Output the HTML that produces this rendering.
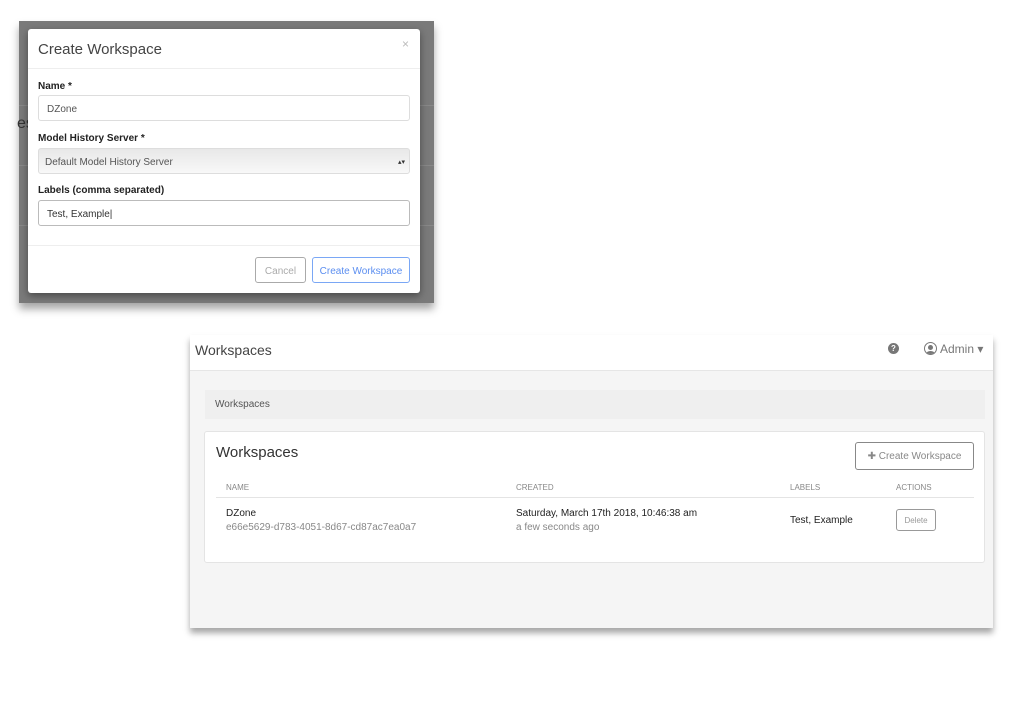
<!DOCTYPE html>
<html><head><style>
*{box-sizing:border-box;margin:0;padding:0}
body{width:1024px;height:728px;background:#fff;font-family:"Liberation Sans",sans-serif;position:relative;overflow:hidden;color:#333}
.abs{position:absolute}
.bd{left:19px;top:21px;width:415px;height:282px;background:#7a7a7a;box-shadow:0 6px 8px rgba(0,0,0,.35)}
.modal{left:28px;top:29px;width:392px;height:264px;background:#fff;border-radius:3px;box-shadow:0 3px 8px rgba(0,0,0,.4)}
.lbl{font-size:10px;font-weight:bold;color:#222}
.inp{height:26px;border:1px solid #ddd;border-radius:3px;font-size:10px;padding-left:8px;line-height:27px;color:#555}
.btn{border-radius:3px;font-size:10px;text-align:center}
</style></head><body>
<div class="abs bd">
 <div class="abs" style="left:0;top:84px;width:415px;height:1px;background:#888"></div>
 <div class="abs" style="left:0;top:144px;width:415px;height:1px;background:#888"></div>
 <div class="abs" style="left:0;top:204px;width:415px;height:1px;background:#888"></div>
 <div class="abs" style="left:-2px;top:94px;font-size:16px;color:#333">es</div>
</div>
<div class="abs modal">
 <div class="abs" style="left:10px;top:12px;font-size:15px;color:#444">Create Workspace</div>
 <div class="abs" style="left:374px;top:8px;font-size:12px;color:#bbb">×</div>
 <div class="abs" style="left:0;top:39px;width:392px;height:1px;background:#eee"></div>
 <div class="abs lbl" style="left:10px;top:52px">Name *</div>
 <div class="abs inp" style="left:10px;top:66px;width:372px">DZone</div>
 <div class="abs lbl" style="left:10px;top:104px">Model History Server *</div>
 <div class="abs inp" style="left:10px;top:119px;width:372px;background:linear-gradient(#e8e8e8,#f8f8f8);padding-left:6px">Default Model History Server<span style="position:absolute;right:4px;top:0;font-size:7px;color:#333">▴▾</span></div>
 <div class="abs lbl" style="left:10px;top:156px">Labels (comma separated)</div>
 <div class="abs inp" style="left:10px;top:171px;width:372px;border-color:#bbb;color:#333">Test, Example|</div>
 <div class="abs" style="left:0;top:216px;width:392px;height:1px;background:#eee"></div>
 <div class="abs btn" style="left:227px;top:228px;width:51px;height:26px;border:1px solid #aaa;color:#aaa;line-height:27px">Cancel</div>
 <div class="abs btn" style="left:284px;top:228px;width:98px;height:26px;border:1px solid #7aa7f5;color:#5b8ef0;line-height:27px">Create Workspace</div>
</div>

<div class="abs" style="left:190px;top:335px;width:803px;height:293px;background:#f5f5f5;box-shadow:0 5px 6px rgba(0,0,0,.35)">
 <div class="abs" style="left:0;top:0;width:803px;height:36px;background:#fff;border-bottom:1px solid #e6e6e6"></div>
 <div class="abs" style="left:5px;top:7px;font-size:14px;color:#444">Workspaces</div>
 <div class="abs" style="left:698px;top:8px;width:11px;height:11px;border-radius:50%;background:#777;color:#fff;font-size:8px;font-weight:bold;text-align:center;line-height:11px">?</div>
 <div class="abs" style="left:734px;top:7px;width:13px;height:13px;border-radius:50%;border:1.5px solid #777;overflow:hidden"><div style="width:5px;height:5px;border-radius:50%;background:#777;margin:1.5px auto 0"></div><div style="width:9px;height:6px;border-radius:50%;background:#777;margin:1px auto 0"></div></div>
 <div class="abs" style="left:750px;top:7px;font-size:12px;color:#777">Admin ▾</div>
 <div class="abs" style="left:15px;top:55px;width:780px;height:29px;background:#efefef"></div>
 <div class="abs" style="left:25px;top:64px;font-size:10px;color:#555">Workspaces</div>
 <div class="abs" style="left:14px;top:96px;width:781px;height:132px;background:#fff;border:1px solid #e4e4e4;border-radius:3px">
  <div class="abs" style="left:11px;top:12px;font-size:15px;color:#333">Workspaces</div>
  <div class="abs btn" style="left:650px;top:10px;width:119px;height:28px;border:1px solid #888;color:#888;line-height:28px">✚ Create Workspace</div>
  <div class="abs" style="left:21px;top:51px;font-size:8px;color:#888">NAME</div>
  <div class="abs" style="left:311px;top:51px;font-size:8px;color:#888">CREATED</div>
  <div class="abs" style="left:585px;top:51px;font-size:8px;color:#888">LABELS</div>
  <div class="abs" style="left:691px;top:51px;font-size:8px;color:#888">ACTIONS</div>
  <div class="abs" style="left:11px;top:65px;width:758px;height:1px;background:#e4e4e4"></div>
  <div class="abs" style="left:21px;top:76px;font-size:10px;color:#222">DZone</div>
  <div class="abs" style="left:21px;top:90px;font-size:10px;color:#888">e66e5629-d783-4051-8d67-cd87ac7ea0a7</div>
  <div class="abs" style="left:311px;top:76px;font-size:10px;color:#222">Saturday, March 17th 2018, 10:46:38 am</div>
  <div class="abs" style="left:311px;top:90px;font-size:10px;color:#888">a few seconds ago</div>
  <div class="abs" style="left:585px;top:83px;font-size:10px;color:#222">Test, Example</div>
  <div class="abs btn" style="left:691px;top:77px;width:40px;height:22px;border:1px solid #999;color:#999;font-size:8px;line-height:22px">Delete</div>
 </div>
</div>
</body></html>
